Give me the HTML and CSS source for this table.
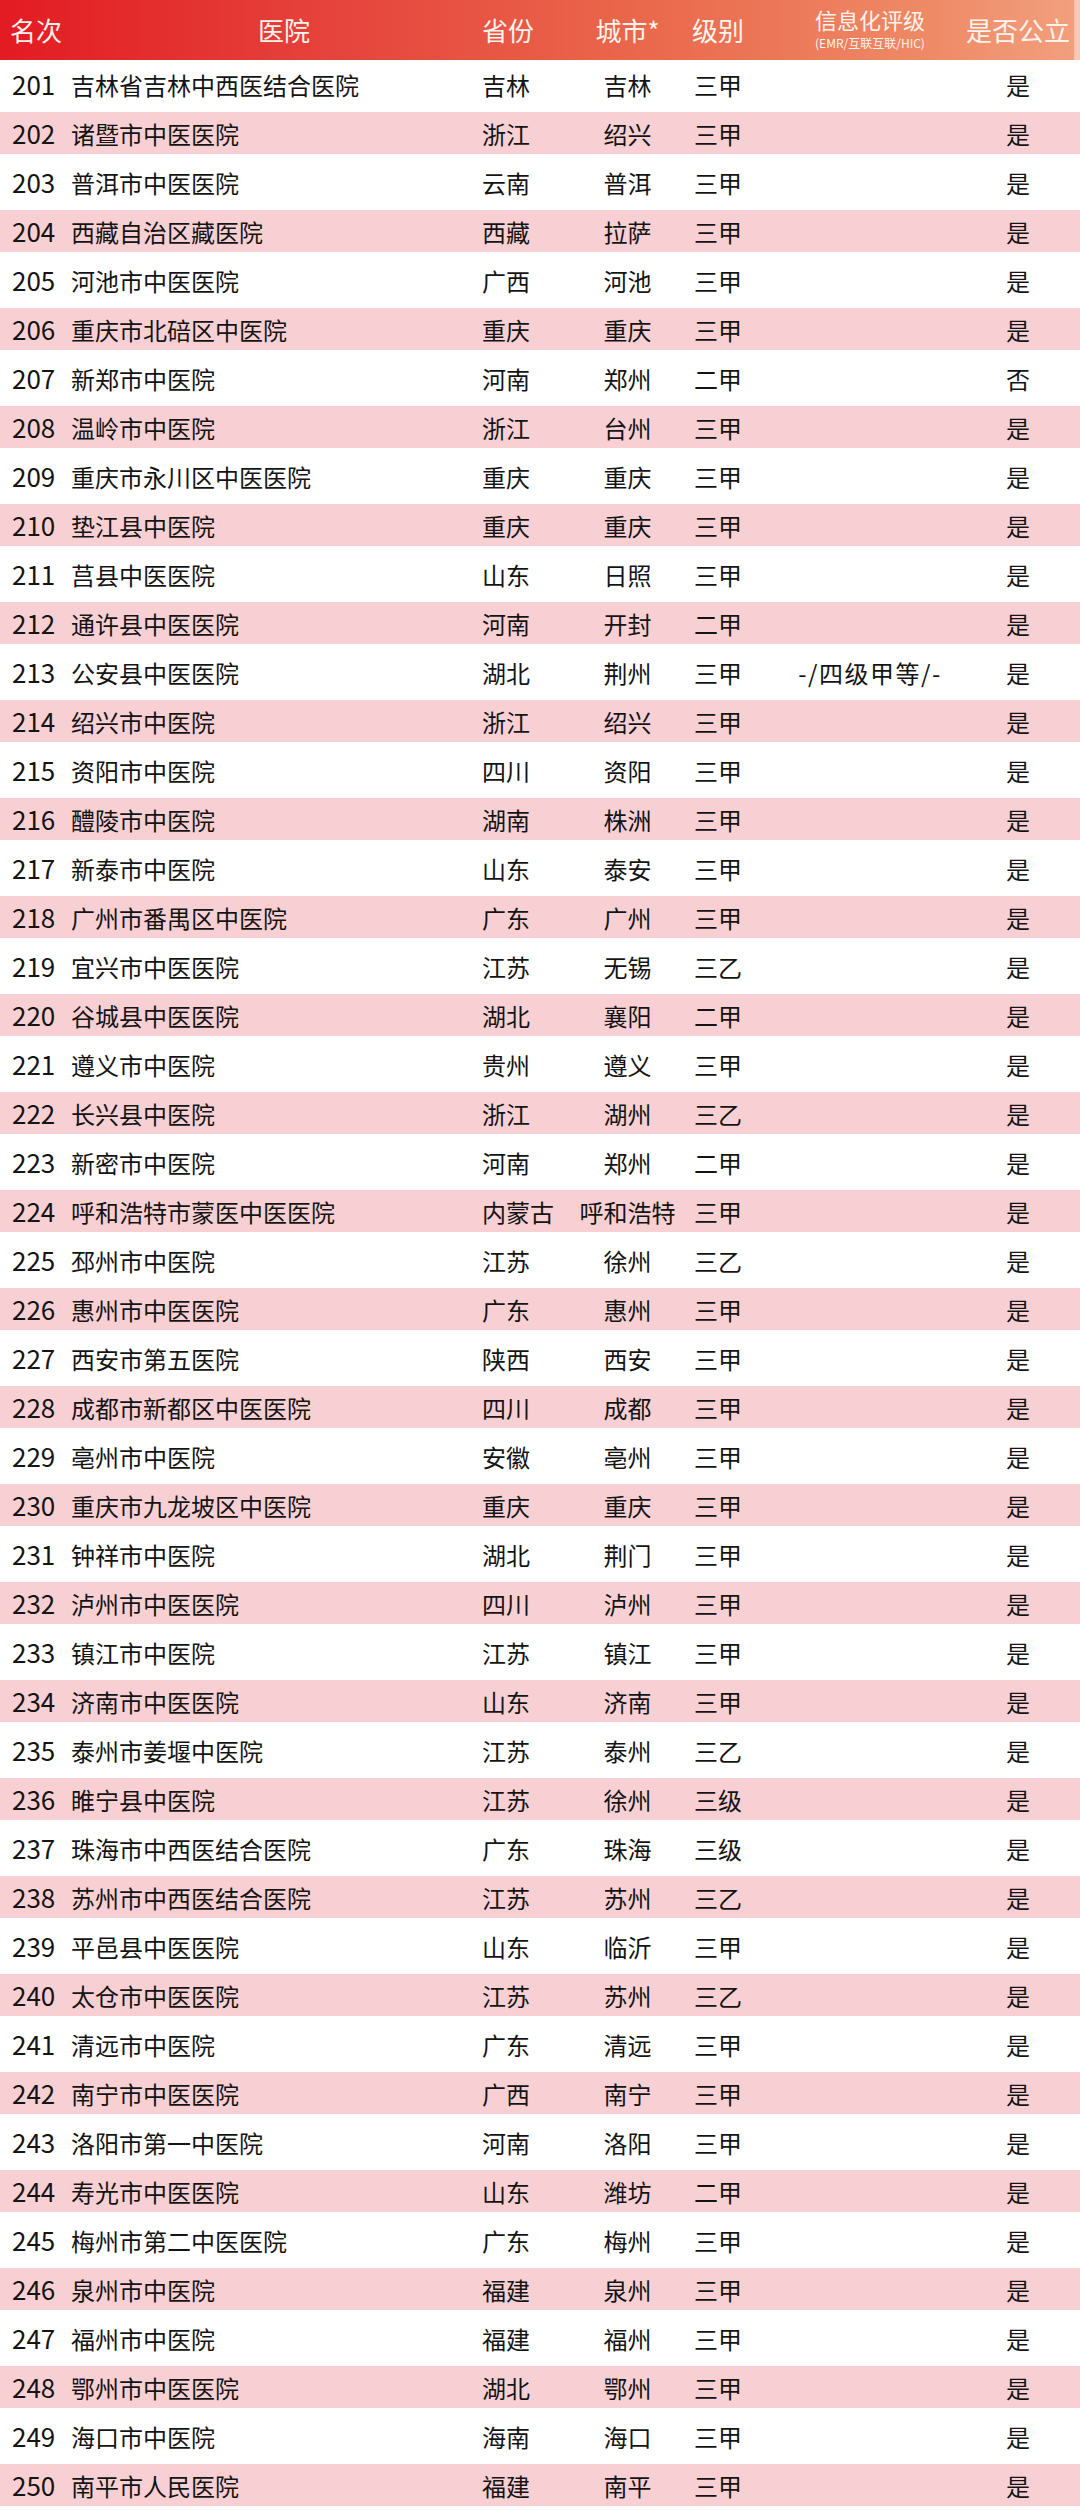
FILE: index.html
```html
<!DOCTYPE html>
<html lang="zh-CN">
<head>
<meta charset="utf-8">
<title>医院排名 201-250</title>
<link rel="stylesheet" href="styles.css">
</head>
<body>
<div class="table">
  <div class="head">
    <div class="c-rank">名次</div>
    <div class="c-name">医院</div>
    <div class="c-prov">省份</div>
    <div class="c-city">城市*</div>
    <div class="c-level">级别</div>
    <div class="c-info"><span class="info-main">信息化评级</span><span class="info-sub">(EMR/互联互联/HIC)</span></div>
    <div class="c-pub">是否公立</div>
  </div>
  <div class="row"><div class="c-rank">201</div><div class="c-name">吉林省吉林中西医结合医院</div><div class="c-prov">吉林</div><div class="c-city">吉林</div><div class="c-level">三甲</div><div class="c-info"></div><div class="c-pub">是</div></div>
  <div class="row alt"><div class="c-rank">202</div><div class="c-name">诸暨市中医医院</div><div class="c-prov">浙江</div><div class="c-city">绍兴</div><div class="c-level">三甲</div><div class="c-info"></div><div class="c-pub">是</div></div>
  <div class="row"><div class="c-rank">203</div><div class="c-name">普洱市中医医院</div><div class="c-prov">云南</div><div class="c-city">普洱</div><div class="c-level">三甲</div><div class="c-info"></div><div class="c-pub">是</div></div>
  <div class="row alt"><div class="c-rank">204</div><div class="c-name">西藏自治区藏医院</div><div class="c-prov">西藏</div><div class="c-city">拉萨</div><div class="c-level">三甲</div><div class="c-info"></div><div class="c-pub">是</div></div>
  <div class="row"><div class="c-rank">205</div><div class="c-name">河池市中医医院</div><div class="c-prov">广西</div><div class="c-city">河池</div><div class="c-level">三甲</div><div class="c-info"></div><div class="c-pub">是</div></div>
  <div class="row alt"><div class="c-rank">206</div><div class="c-name">重庆市北碚区中医院</div><div class="c-prov">重庆</div><div class="c-city">重庆</div><div class="c-level">三甲</div><div class="c-info"></div><div class="c-pub">是</div></div>
  <div class="row"><div class="c-rank">207</div><div class="c-name">新郑市中医院</div><div class="c-prov">河南</div><div class="c-city">郑州</div><div class="c-level">二甲</div><div class="c-info"></div><div class="c-pub">否</div></div>
  <div class="row alt"><div class="c-rank">208</div><div class="c-name">温岭市中医院</div><div class="c-prov">浙江</div><div class="c-city">台州</div><div class="c-level">三甲</div><div class="c-info"></div><div class="c-pub">是</div></div>
  <div class="row"><div class="c-rank">209</div><div class="c-name">重庆市永川区中医医院</div><div class="c-prov">重庆</div><div class="c-city">重庆</div><div class="c-level">三甲</div><div class="c-info"></div><div class="c-pub">是</div></div>
  <div class="row alt"><div class="c-rank">210</div><div class="c-name">垫江县中医院</div><div class="c-prov">重庆</div><div class="c-city">重庆</div><div class="c-level">三甲</div><div class="c-info"></div><div class="c-pub">是</div></div>
  <div class="row"><div class="c-rank">211</div><div class="c-name">莒县中医医院</div><div class="c-prov">山东</div><div class="c-city">日照</div><div class="c-level">三甲</div><div class="c-info"></div><div class="c-pub">是</div></div>
  <div class="row alt"><div class="c-rank">212</div><div class="c-name">通许县中医医院</div><div class="c-prov">河南</div><div class="c-city">开封</div><div class="c-level">二甲</div><div class="c-info"></div><div class="c-pub">是</div></div>
  <div class="row"><div class="c-rank">213</div><div class="c-name">公安县中医医院</div><div class="c-prov">湖北</div><div class="c-city">荆州</div><div class="c-level">三甲</div><div class="c-info info-val">-/四级甲等/-</div><div class="c-pub">是</div></div>
  <div class="row alt"><div class="c-rank">214</div><div class="c-name">绍兴市中医院</div><div class="c-prov">浙江</div><div class="c-city">绍兴</div><div class="c-level">三甲</div><div class="c-info"></div><div class="c-pub">是</div></div>
  <div class="row"><div class="c-rank">215</div><div class="c-name">资阳市中医院</div><div class="c-prov">四川</div><div class="c-city">资阳</div><div class="c-level">三甲</div><div class="c-info"></div><div class="c-pub">是</div></div>
  <div class="row alt"><div class="c-rank">216</div><div class="c-name">醴陵市中医院</div><div class="c-prov">湖南</div><div class="c-city">株洲</div><div class="c-level">三甲</div><div class="c-info"></div><div class="c-pub">是</div></div>
  <div class="row"><div class="c-rank">217</div><div class="c-name">新泰市中医院</div><div class="c-prov">山东</div><div class="c-city">泰安</div><div class="c-level">三甲</div><div class="c-info"></div><div class="c-pub">是</div></div>
  <div class="row alt"><div class="c-rank">218</div><div class="c-name">广州市番禺区中医院</div><div class="c-prov">广东</div><div class="c-city">广州</div><div class="c-level">三甲</div><div class="c-info"></div><div class="c-pub">是</div></div>
  <div class="row"><div class="c-rank">219</div><div class="c-name">宜兴市中医医院</div><div class="c-prov">江苏</div><div class="c-city">无锡</div><div class="c-level">三乙</div><div class="c-info"></div><div class="c-pub">是</div></div>
  <div class="row alt"><div class="c-rank">220</div><div class="c-name">谷城县中医医院</div><div class="c-prov">湖北</div><div class="c-city">襄阳</div><div class="c-level">二甲</div><div class="c-info"></div><div class="c-pub">是</div></div>
  <div class="row"><div class="c-rank">221</div><div class="c-name">遵义市中医院</div><div class="c-prov">贵州</div><div class="c-city">遵义</div><div class="c-level">三甲</div><div class="c-info"></div><div class="c-pub">是</div></div>
  <div class="row alt"><div class="c-rank">222</div><div class="c-name">长兴县中医院</div><div class="c-prov">浙江</div><div class="c-city">湖州</div><div class="c-level">三乙</div><div class="c-info"></div><div class="c-pub">是</div></div>
  <div class="row"><div class="c-rank">223</div><div class="c-name">新密市中医院</div><div class="c-prov">河南</div><div class="c-city">郑州</div><div class="c-level">二甲</div><div class="c-info"></div><div class="c-pub">是</div></div>
  <div class="row alt"><div class="c-rank">224</div><div class="c-name">呼和浩特市蒙医中医医院</div><div class="c-prov">内蒙古</div><div class="c-city">呼和浩特</div><div class="c-level">三甲</div><div class="c-info"></div><div class="c-pub">是</div></div>
  <div class="row"><div class="c-rank">225</div><div class="c-name">邳州市中医院</div><div class="c-prov">江苏</div><div class="c-city">徐州</div><div class="c-level">三乙</div><div class="c-info"></div><div class="c-pub">是</div></div>
  <div class="row alt"><div class="c-rank">226</div><div class="c-name">惠州市中医医院</div><div class="c-prov">广东</div><div class="c-city">惠州</div><div class="c-level">三甲</div><div class="c-info"></div><div class="c-pub">是</div></div>
  <div class="row"><div class="c-rank">227</div><div class="c-name">西安市第五医院</div><div class="c-prov">陕西</div><div class="c-city">西安</div><div class="c-level">三甲</div><div class="c-info"></div><div class="c-pub">是</div></div>
  <div class="row alt"><div class="c-rank">228</div><div class="c-name">成都市新都区中医医院</div><div class="c-prov">四川</div><div class="c-city">成都</div><div class="c-level">三甲</div><div class="c-info"></div><div class="c-pub">是</div></div>
  <div class="row"><div class="c-rank">229</div><div class="c-name">亳州市中医院</div><div class="c-prov">安徽</div><div class="c-city">亳州</div><div class="c-level">三甲</div><div class="c-info"></div><div class="c-pub">是</div></div>
  <div class="row alt"><div class="c-rank">230</div><div class="c-name">重庆市九龙坡区中医院</div><div class="c-prov">重庆</div><div class="c-city">重庆</div><div class="c-level">三甲</div><div class="c-info"></div><div class="c-pub">是</div></div>
  <div class="row"><div class="c-rank">231</div><div class="c-name">钟祥市中医院</div><div class="c-prov">湖北</div><div class="c-city">荆门</div><div class="c-level">三甲</div><div class="c-info"></div><div class="c-pub">是</div></div>
  <div class="row alt"><div class="c-rank">232</div><div class="c-name">泸州市中医医院</div><div class="c-prov">四川</div><div class="c-city">泸州</div><div class="c-level">三甲</div><div class="c-info"></div><div class="c-pub">是</div></div>
  <div class="row"><div class="c-rank">233</div><div class="c-name">镇江市中医院</div><div class="c-prov">江苏</div><div class="c-city">镇江</div><div class="c-level">三甲</div><div class="c-info"></div><div class="c-pub">是</div></div>
  <div class="row alt"><div class="c-rank">234</div><div class="c-name">济南市中医医院</div><div class="c-prov">山东</div><div class="c-city">济南</div><div class="c-level">三甲</div><div class="c-info"></div><div class="c-pub">是</div></div>
  <div class="row"><div class="c-rank">235</div><div class="c-name">泰州市姜堰中医院</div><div class="c-prov">江苏</div><div class="c-city">泰州</div><div class="c-level">三乙</div><div class="c-info"></div><div class="c-pub">是</div></div>
  <div class="row alt"><div class="c-rank">236</div><div class="c-name">睢宁县中医院</div><div class="c-prov">江苏</div><div class="c-city">徐州</div><div class="c-level">三级</div><div class="c-info"></div><div class="c-pub">是</div></div>
  <div class="row"><div class="c-rank">237</div><div class="c-name">珠海市中西医结合医院</div><div class="c-prov">广东</div><div class="c-city">珠海</div><div class="c-level">三级</div><div class="c-info"></div><div class="c-pub">是</div></div>
  <div class="row alt"><div class="c-rank">238</div><div class="c-name">苏州市中西医结合医院</div><div class="c-prov">江苏</div><div class="c-city">苏州</div><div class="c-level">三乙</div><div class="c-info"></div><div class="c-pub">是</div></div>
  <div class="row"><div class="c-rank">239</div><div class="c-name">平邑县中医医院</div><div class="c-prov">山东</div><div class="c-city">临沂</div><div class="c-level">三甲</div><div class="c-info"></div><div class="c-pub">是</div></div>
  <div class="row alt"><div class="c-rank">240</div><div class="c-name">太仓市中医医院</div><div class="c-prov">江苏</div><div class="c-city">苏州</div><div class="c-level">三乙</div><div class="c-info"></div><div class="c-pub">是</div></div>
  <div class="row"><div class="c-rank">241</div><div class="c-name">清远市中医院</div><div class="c-prov">广东</div><div class="c-city">清远</div><div class="c-level">三甲</div><div class="c-info"></div><div class="c-pub">是</div></div>
  <div class="row alt"><div class="c-rank">242</div><div class="c-name">南宁市中医医院</div><div class="c-prov">广西</div><div class="c-city">南宁</div><div class="c-level">三甲</div><div class="c-info"></div><div class="c-pub">是</div></div>
  <div class="row"><div class="c-rank">243</div><div class="c-name">洛阳市第一中医院</div><div class="c-prov">河南</div><div class="c-city">洛阳</div><div class="c-level">三甲</div><div class="c-info"></div><div class="c-pub">是</div></div>
  <div class="row alt"><div class="c-rank">244</div><div class="c-name">寿光市中医医院</div><div class="c-prov">山东</div><div class="c-city">潍坊</div><div class="c-level">二甲</div><div class="c-info"></div><div class="c-pub">是</div></div>
  <div class="row"><div class="c-rank">245</div><div class="c-name">梅州市第二中医医院</div><div class="c-prov">广东</div><div class="c-city">梅州</div><div class="c-level">三甲</div><div class="c-info"></div><div class="c-pub">是</div></div>
  <div class="row alt"><div class="c-rank">246</div><div class="c-name">泉州市中医院</div><div class="c-prov">福建</div><div class="c-city">泉州</div><div class="c-level">三甲</div><div class="c-info"></div><div class="c-pub">是</div></div>
  <div class="row"><div class="c-rank">247</div><div class="c-name">福州市中医院</div><div class="c-prov">福建</div><div class="c-city">福州</div><div class="c-level">三甲</div><div class="c-info"></div><div class="c-pub">是</div></div>
  <div class="row alt"><div class="c-rank">248</div><div class="c-name">鄂州市中医医院</div><div class="c-prov">湖北</div><div class="c-city">鄂州</div><div class="c-level">三甲</div><div class="c-info"></div><div class="c-pub">是</div></div>
  <div class="row"><div class="c-rank">249</div><div class="c-name">海口市中医院</div><div class="c-prov">海南</div><div class="c-city">海口</div><div class="c-level">三甲</div><div class="c-info"></div><div class="c-pub">是</div></div>
  <div class="row alt"><div class="c-rank">250</div><div class="c-name">南平市人民医院</div><div class="c-prov">福建</div><div class="c-city">南平</div><div class="c-level">三甲</div><div class="c-info"></div><div class="c-pub">是</div></div>
</div>
</body>
</html>
```

FILE: styles.css
```css
html, body {
  margin: 0;
  padding: 0;
  background: #ffffff;
}

body {
  font-family: "Noto Sans CJK SC", "Noto Sans", sans-serif;
  color: #141414;
  width: 1080px;
}

.table {
  width: 1080px;
}

.head,
.row {
  display: grid;
  grid-template-columns: 70px 408px 94px 111px 70px 234px 62px 1fr;
  align-items: center;
  white-space: nowrap;
}

.head {
  height: 60px;
  font-size: 26px;
  color: #fff3ee;
  background: linear-gradient(90deg, #e31b22 0%, #e5403a 28%, #ea664b 58%, #ee8a66 86%, #f29f7e 99.4%, #f7c9b6 99.5%, #f7c9b6 100%);
}

.row {
  height: 49px;
  font-size: 24px;
}

.row.alt {
  background: linear-gradient(180deg, transparent 3px, #f8d0d3 3px, #f8d0d3 45px, transparent 45px);
}

.row > div,
.head > div {
  line-height: 1;
}

.head .c-rank {
  padding-left: 10px;
}

.row .c-rank {
  padding-left: 12px;
  font-size: 26px;
  margin-top: -2px;
}

.c-name {
  padding-left: 1px;
}

.head .c-name {
  text-align: center;
  padding-left: 20px;
}

.c-prov {
  padding-left: 4px;
}

.c-city,
.c-level,
.c-info,
.c-pub {
  display: flex;
  justify-content: center;
}

.info-val {
  letter-spacing: 1.5px;
}

.head .c-info {
  flex-direction: column;
  align-items: center;
  gap: 7px;
  margin-top: -4px;
}

.info-main {
  font-size: 22px;
}

.info-sub {
  font-size: 12px;
}
```
